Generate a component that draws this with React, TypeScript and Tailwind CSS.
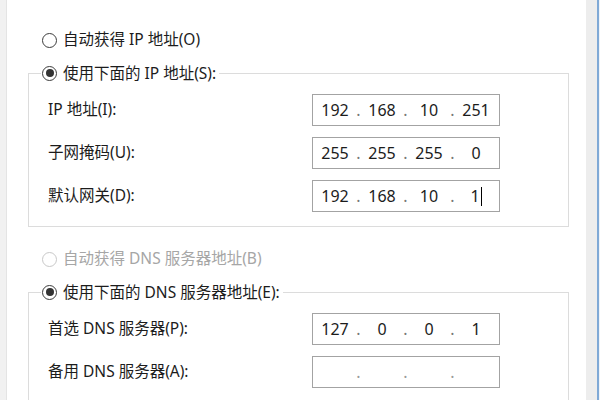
import { Fragment } from 'react';

type RadioProps = { checked?: boolean; disabled?: boolean; label: string };

function Radio({ checked, disabled, label }: RadioProps) {
  const ring = disabled ? 'border-[#c8c8c8]' : 'border-[#3c3c3c]';
  return (
    <span className={`flex h-[22px] items-center gap-[6px] ${disabled ? 'text-[#a6a6a6]' : 'text-[#1c1c1c]'}`}>
      <span className={`flex h-[15px] w-[15px] items-center justify-center rounded-full border bg-white ${ring}`}>
        {checked ? <span className="h-[8px] w-[8px] rounded-full bg-[#333]" /> : null}
      </span>
      <span>{label}</span>
    </span>
  );
}

function IpBox({ parts, cursor }: { parts: string[]; cursor?: boolean }) {
  const empty = parts.every((p) => p === '');
  return (
    <div className="flex h-[32px] w-[188px] items-center border border-[#a3a3a3] bg-white pl-[4px] text-[16px] text-[#1c1c1c]">
      {parts.map((p, i) => (
        <Fragment key={i}>
          <span className="flex w-[36px] items-center justify-center">
            {p}
            {cursor && i === 3 ? <span className="ml-[1px] h-[19px] w-px bg-black" /> : null}
          </span>
          {i < 3 ? (
            <span className={`w-[11px] text-center ${empty ? 'text-[#9a9a9a]' : 'text-[#777]'}`}>.</span>
          ) : null}
        </Fragment>
      ))}
    </div>
  );
}

type Row = { label: string; parts: string[]; cursor?: boolean };

function Group({ legend, rows }: { legend: string; rows: Row[] }) {
  return (
    <fieldset className="ml-[21px] w-[541px] border border-[#dcdcdc] px-0 pt-[10px] pb-[14px]">
      <legend className="ml-[12px] pl-[1px] pr-[3px] leading-[22px]">
        <Radio checked label={legend} />
      </legend>
      <div className="flex flex-col gap-[11px] pl-[19px]">
        {rows.map((r) => (
          <div key={r.label} className="grid grid-cols-[264px_188px] items-center">
            <span className="text-[#1c1c1c]">{r.label}</span>
            <IpBox parts={r.parts} cursor={r.cursor} />
          </div>
        ))}
      </div>
    </fieldset>
  );
}

export default function App() {
  const ipRows: Row[] = [
    { label: 'IP 地址(I):', parts: ['192', '168', '10', '251'] },
    { label: '子网掩码(U):', parts: ['255', '255', '255', '0'] },
    { label: '默认网关(D):', parts: ['192', '168', '10', '1'], cursor: true },
  ];
  const dnsRows: Row[] = [
    { label: '首选 DNS 服务器(P):', parts: ['127', '0', '0', '1'] },
    { label: '备用 DNS 服务器(A):', parts: ['', '', '', ''] },
  ];

  return (
    <div className="flex h-[400px] w-[600px] overflow-hidden bg-white font-['Noto_Sans','Noto_Sans_CJK_SC',sans-serif] text-[15.5px]">
      <div className="w-[7px] shrink-0 border-r border-[#e4e4e4] bg-[#f1f1f1]" />
      <div className="flex w-[579px] shrink-0 flex-col pt-[29px]">
        <div className="pl-[35px]">
          <Radio label="自动获得 IP 地址(O)" />
        </div>
        <div className="mt-[11px]">
          <Group legend="使用下面的 IP 地址(S):" rows={ipRows} />
        </div>
        <div className="mt-[21px] pl-[35px]">
          <Radio disabled label="自动获得 DNS 服务器地址(B)" />
        </div>
        <div className="mt-[11px]">
          <Group legend="使用下面的 DNS 服务器地址(E):" rows={dnsRows} />
        </div>
      </div>
      <div className="w-[11px] shrink-0 bg-[#ededed]" />
      <div className="w-[2px] shrink-0 bg-[#7fa9d6]" />
      <div className="w-px shrink-0 bg-[#eef3f9]" />
    </div>
  );
}
